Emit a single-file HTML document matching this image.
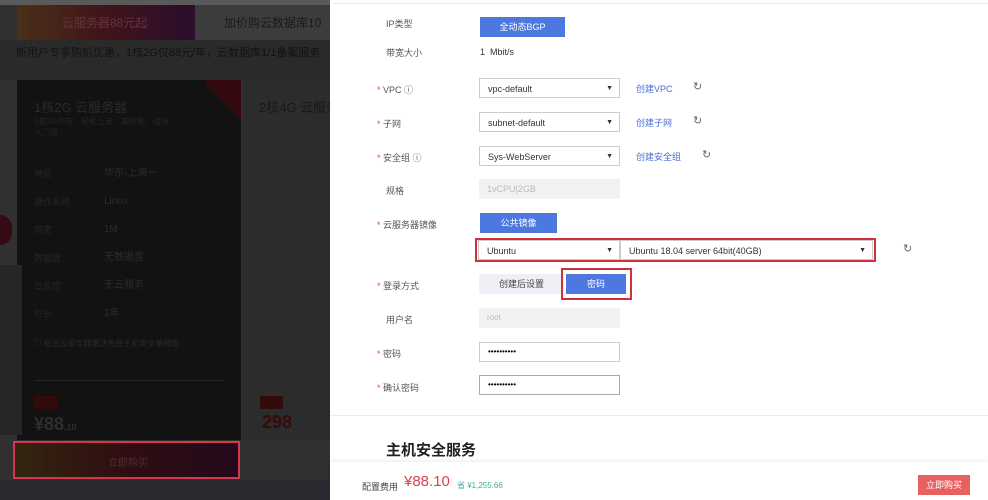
<!DOCTYPE html>
<html><head><meta charset="utf-8"><style>
body{margin:0;width:988px;height:500px;overflow:hidden;position:relative;font-family:"Liberation Sans","Noto Sans CJK SC",sans-serif;background:#303030}
.a{position:absolute}
.lbl{position:absolute;left:386px;font-size:9px;color:#555}
.req:before{content:"* ";color:#e84545}
.sel{position:absolute;height:20px;border:1px solid #ccc;background:#fff;font-size:9px;color:#333;line-height:20px;padding-left:8px;box-sizing:border-box}
.sel:after{content:"▼";position:absolute;right:6px;font-size:7px;color:#333}
.lnk{position:absolute;font-size:9px;color:#4a6fd6}
.ref{position:absolute;font-size:11px;color:#666}
.btn{position:absolute;background:#4d78e0;color:#fff;font-size:9px;text-align:center}
</style></head><body>
<div class="a" style="left:0;top:0;width:330px;height:5px;background:#5a5a5a"></div>
<div class="a" style="left:17px;top:5px;width:178px;height:35px;background:linear-gradient(90deg,#4a3018,#40141a,#2a0e2c)"></div>
<div class="a" style="left:62px;top:14px;font-size:12px;color:#6a3040">云服务器88元起</div>
<div class="a" style="left:195px;top:5px;width:135px;height:35px;background:#3c3c3c"></div>
<div class="a" style="left:224px;top:14px;font-size:12px;color:#1a1a1a">加价购云数据库10</div>
<div class="a" style="left:0;top:40px;width:330px;height:40px;background:#2a2a2a"></div>
<div class="a" style="left:16px;top:44px;font-size:11px;color:#121212;white-space:nowrap">新用户专享购机优惠，1核2G仅88元/年，云数据库1/1备案服务</div>
<div class="a" style="left:17px;top:80px;width:224px;height:360px;background:#121212"></div>
<div class="a" style="left:206px;top:80px;width:35px;height:45px;background:linear-gradient(45deg,transparent 50%,#340a0e 50%)"></div>
<div class="a" style="left:34px;top:97px;font-size:13px;color:#2a2a2a">1核2G 云服务器</div>
<div class="a" style="left:34px;top:116px;font-size:8px;color:#262626;width:180px">1核2G内存，轻松上云，高性能，适合<br>入门级</div>
<div class="a" style="left:34px;top:160px;font-size:9px;color:#262626;line-height:28px">地区<br>操作系统<br>带宽<br>数据盘<br>云监控<br>时长</div>
<div class="a" style="left:104px;top:160px;font-size:10px;color:#2c2c2c;line-height:28px">华东-上海一<br>Linux<br>1M<br>无数据盘<br>无云服务<br>1年</div>
<div class="a" style="left:34px;top:338px;font-size:8px;color:#2a2a2a">☐ 每台云服务器赠送免费主机安全基础版</div>
<div class="a" style="left:34px;top:380px;width:190px;height:1px;background:#262626"></div>
<div class="a" style="left:34px;top:396px;font-size:8px;color:#2e0a0a;background:#340a0a;padding:1px 2px">0.7折</div>
<div class="a" style="left:34px;top:414px;font-size:18px;font-weight:bold;color:#2e2e2e">¥88<span style="font-size:9px">.10</span></div>
<div class="a" style="left:242px;top:80px;width:88px;height:360px;background:#2c2c2c"></div>
<div class="a" style="left:259px;top:97px;font-size:13px;color:#181818">2核4G 云服务</div>
<div class="a" style="left:260px;top:396px;font-size:8px;background:#340a0a;color:#2a0a0a;padding:1px 2px">1.0折</div>
<div class="a" style="left:262px;top:412px;font-size:18px;font-weight:bold;color:#340c0c">298</div>
<div class="a" style="left:0;top:215px;width:12px;height:30px;background:#340a14;border-radius:0 15px 15px 0"></div>
<div class="a" style="left:0;top:265px;width:22px;height:170px;background:#262626"></div>
<div class="a" style="left:13px;top:441px;width:227px;height:38px;border:2px solid #d4364a;box-sizing:border-box;background:linear-gradient(90deg,#33250f,#300d12,#240a1c)"></div>
<div class="a" style="left:108px;top:454px;font-size:10px;color:#4a3030">立即购买</div>
<div class="a" style="left:0;top:480px;width:330px;height:20px;background:#2a2a30"></div>
<div class="a" style="left:330px;top:0;width:658px;height:500px;background:#fff"></div>
<div class="a" style="left:333px;top:3px;width:655px;height:1px;background:#e6e6e6"></div>
<div class="lbl" style="top:17px">IP类型</div>
<div class="btn" style="left:480px;top:17px;width:85px;height:20px;line-height:20px">全动态BGP</div>
<div class="lbl" style="top:46px">带宽大小</div>
<div class="a" style="left:480px;top:47px;font-size:9px;color:#333">1&nbsp; Mbit/s</div>
<div class="lbl req" style="left:377px;top:83px">VPC ⓘ</div>
<div class="sel" style="left:479px;top:78px;width:141px">vpc-default</div>
<div class="lnk" style="left:636px;top:82px">创建VPC</div><div class="ref" style="left:693px;top:80px">↻</div>
<div class="lbl req" style="left:377px;top:117px">子网</div>
<div class="sel" style="left:479px;top:112px;width:141px">subnet-default</div>
<div class="lnk" style="left:636px;top:116px">创建子网</div><div class="ref" style="left:693px;top:114px">↻</div>
<div class="lbl req" style="left:377px;top:151px">安全组 ⓘ</div>
<div class="sel" style="left:479px;top:146px;width:141px">Sys-WebServer</div>
<div class="lnk" style="left:636px;top:150px">创建安全组</div><div class="ref" style="left:702px;top:148px">↻</div>
<div class="lbl" style="top:184px">规格</div>
<div class="a" style="left:479px;top:179px;width:141px;height:20px;background:#f2f2f2;font-size:9px;color:#bbb;line-height:20px;padding-left:8px;box-sizing:border-box">1vCPU|2GB</div>
<div class="lbl req" style="left:377px;top:218px">云服务器镜像</div>
<div class="btn" style="left:480px;top:213px;width:77px;height:20px;line-height:20px">公共镜像</div>
<div class="a" style="left:475px;top:238px;width:401px;height:24px;border:2px solid #d0303a;box-sizing:border-box"></div>
<div class="sel" style="left:478px;top:240px;width:142px">Ubuntu</div>
<div class="sel" style="left:620px;top:240px;width:253px">Ubuntu 18.04 server 64bit(40GB)</div>
<div class="ref" style="left:903px;top:242px">↻</div>
<div class="lbl req" style="left:377px;top:279px">登录方式</div>
<div class="a" style="left:479px;top:274px;width:85px;height:20px;background:#eef0f6;font-size:9px;color:#444;text-align:center;line-height:20px">创建后设置</div>
<div class="a" style="left:561px;top:268px;width:71px;height:32px;border:2px solid #d0303a;box-sizing:border-box"></div>
<div class="btn" style="left:566px;top:274px;width:60px;height:20px;line-height:20px">密码</div>
<div class="lbl" style="top:313px">用户名</div>
<div class="a" style="left:479px;top:308px;width:141px;height:20px;background:#f2f2f2;font-size:8px;color:#bbb;line-height:20px;padding-left:8px;box-sizing:border-box">root</div>
<div class="lbl req" style="left:377px;top:347px">密码</div>
<div class="a" style="left:479px;top:342px;width:141px;height:20px;border:1px solid #ccc;box-sizing:border-box;font-size:8px;line-height:18px;padding-left:8px">••••••••••</div>
<div class="lbl req" style="left:377px;top:381px">确认密码</div>
<div class="a" style="left:479px;top:375px;width:141px;height:20px;border:1px solid #aaa;box-sizing:border-box;font-size:8px;line-height:18px;padding-left:8px">••••••••••</div>
<div class="a" style="left:330px;top:415px;width:658px;height:1px;background:#ececec"></div>
<div class="a" style="left:386px;top:439px;font-size:15px;color:#222;font-weight:bold">主机安全服务</div>
<div class="a" style="left:330px;top:462px;width:658px;height:38px;background:#fff;box-shadow:0 -2px 4px rgba(0,0,0,.06)"></div>
<div class="a" style="left:362px;top:480px;font-size:9px;color:#444">配置费用</div>
<div class="a" style="left:404px;top:473px;font-size:15px;color:#e0404a">¥88.10</div>
<div class="a" style="left:457px;top:480px;font-size:8px;color:#3bb38a">省 ¥1,255.66</div>
<div class="a" style="left:918px;top:475px;width:52px;height:20px;background:#e8615f;color:#fff;font-size:9px;text-align:center;line-height:20px">立即购买</div>
</body></html>
